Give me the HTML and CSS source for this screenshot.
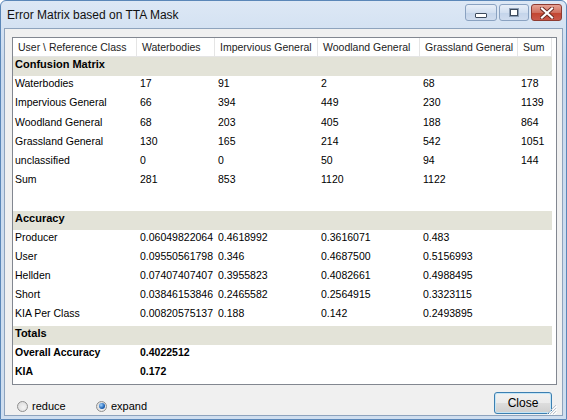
FILE: index.html
```html
<!DOCTYPE html>
<html lang="en">
<head>
    <meta charset="UTF-8">
    <title>Error Matrix based on TTA Mask</title>
    <link rel="stylesheet" href="styles.css">
</head>
<body>

<div class="window">
    <div class="titlebar">
        <span class="title">Error Matrix based on TTA Mask</span>
        <div class="caption-buttons">
            <div class="cap-btn cap-min"><span class="glyph-min"></span></div>
            <div class="cap-btn cap-max"><span class="glyph-max"></span></div>
            <div class="cap-btn cap-close">
                <svg width="14" height="12" viewBox="0 0 14 12">
                    <path d="M2 1.5 L12 10.5 M12 1.5 L2 10.5" stroke="#6b2a22" stroke-width="4" stroke-linecap="square"/>
                    <path d="M2 1.5 L12 10.5 M12 1.5 L2 10.5" stroke="#ffffff" stroke-width="2.2" stroke-linecap="square"/>
                </svg>
            </div>
        </div>
    </div>

    <div class="client">
        <div class="panel">
            <div class="row header">
                <div class="cell">User \ Reference Class</div>
                <div class="cell">Waterbodies</div>
                <div class="cell">Impervious General</div>
                <div class="cell">Woodland General</div>
                <div class="cell">Grassland General</div>
                <div class="cell">Sum</div>
            </div>

            <div class="row band"><div class="cell">Confusion Matrix</div></div>
            <div class="row">
                <div class="cell">Waterbodies</div><div class="cell num">17</div><div class="cell num">91</div>
                <div class="cell num">2</div><div class="cell num">68</div><div class="cell num">178</div>
            </div>
            <div class="row">
                <div class="cell">Impervious General</div><div class="cell num">66</div><div class="cell num">394</div>
                <div class="cell num">449</div><div class="cell num">230</div><div class="cell num">1139</div>
            </div>
            <div class="row">
                <div class="cell">Woodland General</div><div class="cell num">68</div><div class="cell num">203</div>
                <div class="cell num">405</div><div class="cell num">188</div><div class="cell num">864</div>
            </div>
            <div class="row">
                <div class="cell">Grassland General</div><div class="cell num">130</div><div class="cell num">165</div>
                <div class="cell num">214</div><div class="cell num">542</div><div class="cell num">1051</div>
            </div>
            <div class="row">
                <div class="cell">unclassified</div><div class="cell num">0</div><div class="cell num">0</div>
                <div class="cell num">50</div><div class="cell num">94</div><div class="cell num">144</div>
            </div>
            <div class="row">
                <div class="cell">Sum</div><div class="cell num">281</div><div class="cell num">853</div>
                <div class="cell num">1120</div><div class="cell num">1122</div><div class="cell"></div>
            </div>
            <div class="row"></div>

            <div class="row band"><div class="cell">Accuracy</div></div>
            <div class="row">
                <div class="cell">Producer</div><div class="cell num">0.06049822064</div><div class="cell num">0.4618992</div>
                <div class="cell num">0.3616071</div><div class="cell num">0.483</div><div class="cell"></div>
            </div>
            <div class="row">
                <div class="cell">User</div><div class="cell num">0.09550561798</div><div class="cell num">0.346</div>
                <div class="cell num">0.4687500</div><div class="cell num">0.5156993</div><div class="cell"></div>
            </div>
            <div class="row">
                <div class="cell">Hellden</div><div class="cell num">0.07407407407</div><div class="cell num">0.3955823</div>
                <div class="cell num">0.4082661</div><div class="cell num">0.4988495</div><div class="cell"></div>
            </div>
            <div class="row">
                <div class="cell">Short</div><div class="cell num">0.03846153846</div><div class="cell num">0.2465582</div>
                <div class="cell num">0.2564915</div><div class="cell num">0.3323115</div><div class="cell"></div>
            </div>
            <div class="row">
                <div class="cell">KIA Per Class</div><div class="cell num">0.00820575137</div><div class="cell num">0.188</div>
                <div class="cell num">0.142</div><div class="cell num">0.2493895</div><div class="cell"></div>
            </div>

            <div class="row band"><div class="cell">Totals</div></div>
            <div class="row strong">
                <div class="cell">Overall Accuracy</div><div class="cell num">0.4022512</div>
            </div>
            <div class="row strong">
                <div class="cell">KIA</div><div class="cell num">0.172</div>
            </div>
        </div>

        <div class="footer">
            <label class="radio"><span class="radio-dot"></span>reduce</label>
            <label class="radio checked"><span class="radio-dot"></span>expand</label>
            <div class="close-button">Close</div>
            <svg class="grip" width="11" height="11" viewBox="0 0 11 11">
                <path d="M10 1 L1 10 M10 4 L4 10 M10 7 L7 10" stroke="#b9c3cf" stroke-width="1"/>
                <path d="M11 2 L2 11 M11 5 L5 11 M11 8 L8 11" stroke="#ffffff" stroke-width="1"/>
            </svg>
        </div>
    </div>
</div>

</body>
</html>
```

FILE: styles.css
```css
body {
    margin: 0;
    font-family: "Liberation Sans", Arial, sans-serif;
    background-color: #ffffff;
}
.window {
    width: 567px;
    height: 420px;
    box-sizing: border-box;
    border: 1px solid #5b87b8;
    border-radius: 6px 6px 0 0;
    background: linear-gradient(#dde8f5, #c9daef 60px, #cfdeef);
    display: flex;
    flex-direction: column;
    overflow: hidden;
}
.titlebar {
    height: 27px;
    display: flex;
    align-items: flex-start;
    justify-content: space-between;
}
.title {
    font-size: 12px;
    color: #111111;
    margin-top: 7px;
    margin-left: 6px;
}
.caption-buttons {
    display: flex;
    gap: 2px;
    margin-top: 3px;
    margin-right: 4px;
}
.cap-btn {
    height: 17px;
    box-sizing: border-box;
    border: 1px solid #8aa2c1;
    border-radius: 3px;
    background: linear-gradient(#e8eff8, #d2dff0 50%, #c3d4ea 51%, #cfdcee);
    display: flex;
    align-items: center;
    justify-content: center;
}
.cap-min {
    width: 32px;
}
.cap-max {
    width: 30px;
}
.cap-close {
    width: 31px;
    border-color: #8e3b31;
    background: linear-gradient(#e7a394, #d0705f 50%, #c2442f 51%, #c9584a);
}
.glyph-min {
    width: 10px;
    height: 3px;
    margin-top: 6px;
    background-color: #ffffff;
    border: 1px solid #3c4a5c;
    border-radius: 1px;
}
.glyph-max {
    width: 6px;
    height: 5px;
    background-color: #ffffff;
    border: 1px solid #3c4a5c;
    outline: 1px solid #8b9db4;
}
.client {
    flex: 1;
    margin: 0 3px 3px 3px;
    border: 1px solid #8ea3bd;
    background-color: #f0f0f0;
    padding: 8px 5px 0 7px;
    display: flex;
    flex-direction: column;
}
.panel {
    height: 348px;
    box-sizing: border-box;
    border: 1px solid #828790;
    background-color: #ffffff;
    overflow: hidden;
}
.row {
    display: grid;
    grid-template-columns: 124px 78px 103px 102px 98px 34px;
    width: 539px;
    height: 19.2px;
    font-size: 10.5px;
    line-height: 14px;
    color: #000000;
}
.cell {
    padding-left: 2px;
    white-space: nowrap;
    overflow: hidden;
}
.num {
    padding-left: 3px;
}
.header {
    height: 19px;
    box-sizing: border-box;
    border-bottom: 1px solid #e5e5e5;
    align-items: center;
    color: #222222;
}
.header .cell {
    padding-left: 5px;
    border-right: 1px solid #e5e5e5;
    height: 100%;
    display: flex;
    align-items: center;
}
.band {
    background-color: #e3e3d8;
    font-weight: bold;
    font-size: 11px;
}
.band .cell {
    grid-column: 1 / -1;
}
.strong {
    font-weight: bold;
}
.footer {
    flex: 1;
    display: flex;
    align-items: center;
    position: relative;
    font-size: 11px;
    color: #000000;
}
.radio {
    display: flex;
    align-items: center;
    gap: 4px;
    margin-top: 12px;
}
.radio:first-child {
    margin-left: 5px;
    width: 79px;
}
.radio-dot {
    width: 11px;
    height: 11px;
    box-sizing: border-box;
    border-radius: 50%;
    border: 1px solid #8f8f8f;
    background: radial-gradient(circle at 60% 60%, #f4f4f4, #d6d6d6);
    display: flex;
    align-items: center;
    justify-content: center;
}
.checked .radio-dot::after {
    content: "";
    width: 6px;
    height: 6px;
    border-radius: 50%;
    background: radial-gradient(circle at 35% 35%, #9fd2ff, #1e62b4 60%, #103f80);
}
.close-button {
    margin-left: auto;
    margin-right: 5px;
    margin-top: 6px;
    width: 58px;
    height: 22px;
    box-sizing: border-box;
    border: 1px solid #3c7fb1;
    border-radius: 3px;
    box-shadow: inset 0 0 0 1px #c4e5f6;
    background: linear-gradient(#f2f2f2, #ebebeb 50%, #dddddd 51%, #cfcfcf);
    font-size: 12px;
    display: flex;
    align-items: center;
    justify-content: center;
}
.grip {
    position: absolute;
    right: 0;
    bottom: 0;
}
```
